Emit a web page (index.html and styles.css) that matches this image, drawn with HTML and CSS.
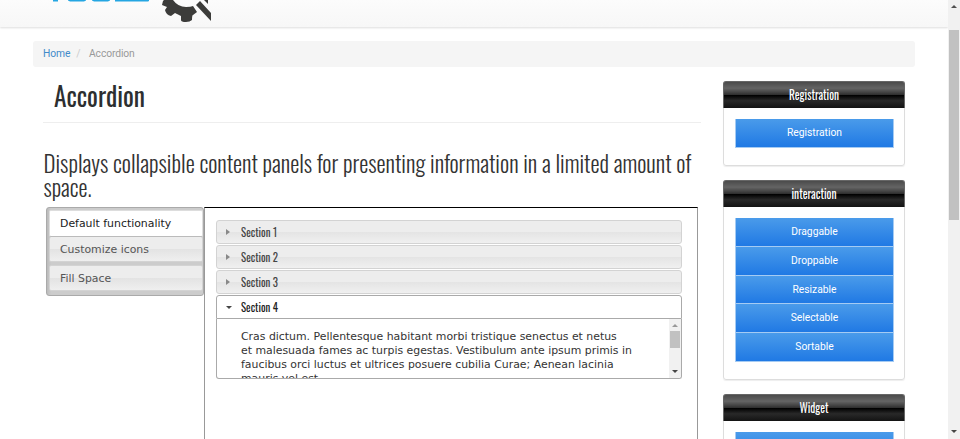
FILE: index.html
```
<!DOCTYPE html>
<html lang="en">
<head>
<meta charset="utf-8">
<title>Accordion</title>
<link rel="stylesheet" href="styles.css">
</head>
<body>
<div class="viewport">
  <div class="page">
    <header class="topbar">
      <svg class="logo" width="215" height="24" viewBox="0 0 215 24">
        <path fill="#25a6e2" d="M53 0h5v1.5h-5zM68 0h18v.5l-2 1H70l-2-1zM92 0h18v.5l-2 1H94l-2-1zM115 0h34v1l-1 .5h-33z"/>
        <path fill="#3c3c3a" d="M164 0h9q5 7 13 7 5 0 7-1l4 6-4 3q-1 0-1 5-2 2-6 2-5 0-5-2v-4l-6-3-4 3q-5-1-6-6l2-3-5-2 1-4zM196 5l4-4 11 12v8zM204 0h4v4z"/>
      </svg>
    </header>
    <div class="container">
      <nav class="breadcrumb"><a>Home</a><span class="slash">/</span><span class="current">Accordion</span></nav>
      <div class="columns">
        <main class="main">
          <h1><svg width="92" height="34"><text x="0" y="25" textLength="91" lengthAdjust="spacingAndGlyphs">Accordion</text></svg></h1>
          <h3><svg width="658" height="50"><text x="0.5" y="22" textLength="648" lengthAdjust="spacingAndGlyphs">Displays collapsible content panels for presenting information in a limited amount of</text><text x="0.5" y="45.5" textLength="48" lengthAdjust="spacingAndGlyphs">space.</text></svg></h3>
          <div class="demo">
            <ul class="tabs">
              <li class="tab active"><span>Default functionality</span></li>
              <li class="tab second"><span>Customize icons</span></li>
              <li class="tab third"><span>Fill Space</span></li>
            </ul>
            <section class="frame">
              <div class="bar"><i class="right"></i><svg width="40" height="18"><text x="0" y="14" textLength="36" lengthAdjust="spacingAndGlyphs">Section 1</text></svg></div>
              <div class="bar"><i class="right"></i><svg width="40" height="18"><text x="0" y="14" textLength="37" lengthAdjust="spacingAndGlyphs">Section 2</text></svg></div>
              <div class="bar"><i class="right"></i><svg width="40" height="18"><text x="0" y="14" textLength="37" lengthAdjust="spacingAndGlyphs">Section 3</text></svg></div>
              <div class="bar open"><i class="down"></i><svg width="40" height="18"><text x="0" y="14" textLength="37" lengthAdjust="spacingAndGlyphs">Section 4</text></svg></div>
              <div class="content">
                <p>Cras dictum. Pellentesque habitant morbi tristique senectus et netus<br>et malesuada fames ac turpis egestas. Vestibulum ante ipsum primis in<br>faucibus orci luctus et ultrices posuere cubilia Curae; Aenean lacinia<br>mauris vel est.</p>
                <div class="innerscroll"><i class="up"></i><b></b><i class="down"></i></div>
              </div>
            </section>
          </div>
        </main>
        <aside class="side">
          <section class="card first"><h2><svg width="60" height="20"><text x="5" y="15" textLength="50" lengthAdjust="spacingAndGlyphs">Registration</text></svg></h2>
            <ul><li>Registration</li></ul></section>
          <section class="card second"><h2><svg width="60" height="20"><text x="7.5" y="15" textLength="45" lengthAdjust="spacingAndGlyphs">interaction</text></svg></h2>
            <ul><li>Draggable</li><li>Droppable</li><li>Resizable</li><li>Selectable</li><li>Sortable</li></ul></section>
          <section class="card"><h2><svg width="60" height="20"><text x="15.5" y="15" textLength="29" lengthAdjust="spacingAndGlyphs">Widget</text></svg></h2>
            <ul><li></li></ul></section>
        </aside>
      </div>
    </div>
  </div>
  <div class="pagescroll"><i class="up"></i><b></b><i class="down"></i></div>
</div>
</body>
</html>
```
FILE: styles.css
```
* { box-sizing: border-box; }
body { margin: 0; overflow: hidden; background: #fff; color: #333; font: 10.3px/15px Roboto, sans-serif; }
ul, p, h1, h2, h3 { margin: 0; padding: 0; font-weight: 400; list-style: none; }
svg { display: block; }
svg text { font-family: Oswald, Roboto, sans-serif; }
.viewport { display: flex; height: 439px; overflow: hidden; }
.page { width: 948px; flex: none; overflow: hidden; }
.topbar { height: 27px; background: linear-gradient(#fcfcfc, #f7f7f7); box-shadow: 0 1px 2px #ddd; }
.container { margin: 14px 33px 0; }
.breadcrumb { display: flex; height: 26px; align-items: center; background: #f5f5f5; border-radius: 3px; padding: 0 10px 1px; color: #999; }
.breadcrumb a { color: #428bca; }
.breadcrumb { letter-spacing: -0.1px; }
.slash { color: #ccc; margin: 0 8.5px 0 6px; }
.columns { display: flex; }
.main { width: 658px; margin-left: 10px; flex: none; }
h1 { height: 56px; padding: 15px 0 0 11px; border-bottom: 1px solid #eee; }
h1 text { font-size: 27.5px; fill: #2d2f30; }
h3 { height: 84px; padding-top: 28px; }
h3 text { font-size: 24px; fill: #333; font-weight: 300; }
.demo { display: flex; padding-left: 3px; align-items: flex-start; }
.tabs { width: 158px; height: 89px; flex: none; border: 1px solid #aaa; border-radius: 3px; background: linear-gradient(90deg, #bbb, #ccc 4px, #ccc); padding: 2px 0 2px 2px; }
.tab { height: 26px; border: 1px solid #d3d3d3; border-radius: 2px; background: linear-gradient(#ededed 50%, #e3e3e3 51%, #efefef); color: #555; padding-left: 10px; font: 10.9px/26px "DejaVu Sans", sans-serif; }
.tab.active { height: 27px; background: #fff; color: #212121; border-color: #ddd #ddd #bbb; }
.tab.second { height: 25px; border-top: 0; }
.tab.third { margin-top: 3px; }
.frame { width: 494px; height: 260px; border: 1px solid #999; border-top-color: #000; padding: 12px 15px 0 11px; }
.bar { height: 24px; margin-bottom: 1px; border: 1px solid #d3d3d3; border-radius: 3px; background: linear-gradient(#ededed 50%, #e4e4e4 51%, #f0f0f0); display: flex; align-items: center; padding-left: 9px; }
.bar svg { margin-left: 10px; }
.bar text { font-size: 11.8px; fill: #444; }
.bar.open { background: #fff; border-color: #aaa; border-radius: 3px 3px 0 0; margin: 0; }
.bar.open svg { margin-left: 9px; }
.bar.open text { fill: #212121; }
i { flex: none; display: block; }
.right { width: 4px; border: solid transparent; border-width: 3px 0 3px 4px; border-left-color: #888; margin-right: 1px; }
.down { width: 6px; border: solid transparent; border-width: 3px 3px 0; border-top-color: #454545; }
.up { width: 6px; border: solid transparent; border-width: 0 3px 3px; border-bottom-color: #999; }
.content { height: 60px; overflow: hidden; border: 1px solid #aaa; border-top: 0; border-radius: 0 0 3px 3px; display: flex; justify-content: space-between; }
.content p { padding: 11px 0 0 24px; white-space: nowrap; font: 10.9px/14.1px "DejaVu Sans", sans-serif; color: #333; }
.innerscroll { width: 12px; background: #f1f1f1; display: flex; flex-direction: column; align-items: center; padding: 5px 0; }
.innerscroll b { width: 10px; height: 17px; background: #c1c1c1; margin: 4px 0 auto; }
.side { width: 182px; margin: 14px 0 0 22px; flex: none; }
.card { border: 1px solid #ddd; border-radius: 3px; height: 200px; margin-bottom: 14px; box-shadow: 0 1px 1px #eee; }
.card.first { height: 85px; }
.card h2 { height: 27px; margin: -1px -1px 0; border: 1px solid #666; border-bottom: 0; border-radius: 3px 3px 0 0; background: linear-gradient(#4b4b4b, #646464 24%, #474747 38%, #2c2c2c 50%, #000 51%, #292929 72%, #131313); display: flex; justify-content: center; align-items: center; }
.card text { font-size: 13px; fill: #fff; }
.card ul { margin: 11px 10px 0 11px; }
.card li { height: 28.8px; border: 1px solid #a5cbf3; border-width: 0 1px 1px; background: linear-gradient(#4a9bea, #2079e4); text-align: center; line-height: 27px; color: #fff; }
.pagescroll { width: 12px; background: #f1f1f1; display: flex; flex-direction: column; align-items: center; padding: 5px 0 6px; }
.pagescroll .up { border-bottom-color: #505050; }
.pagescroll b { width: 10px; height: 190px; background: #c1c1c1; margin: 22px 0 auto; }
```
